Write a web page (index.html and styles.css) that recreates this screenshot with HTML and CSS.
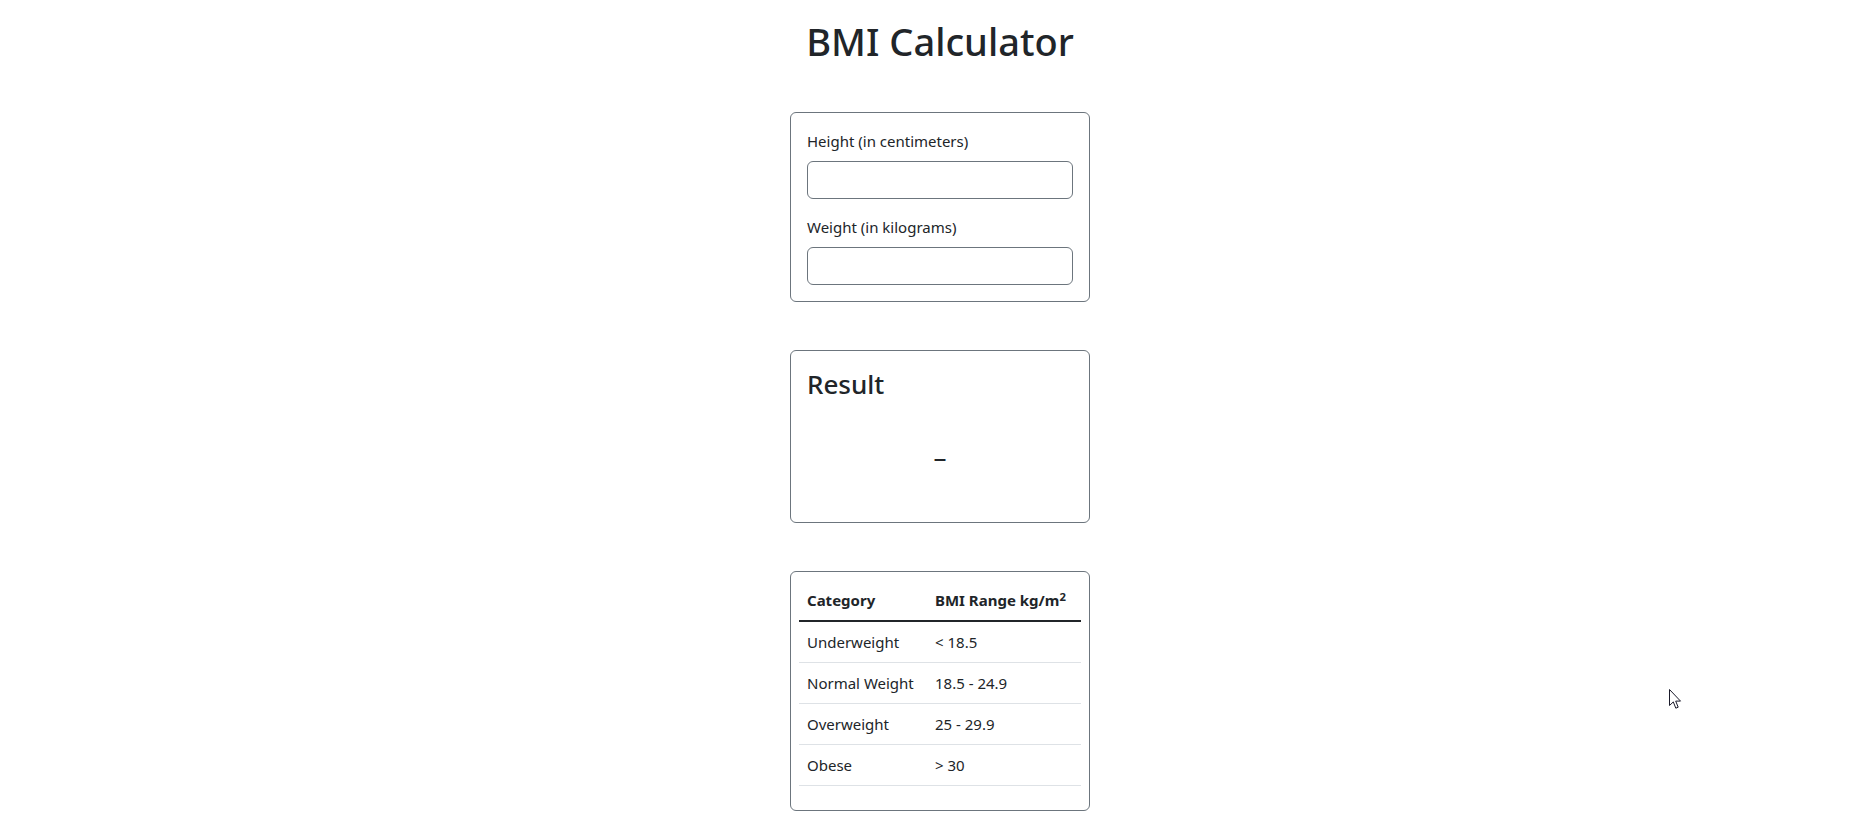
FILE: index.html
```html
<!DOCTYPE html>
<html lang="en">
<head>
<meta charset="utf-8">
<title>BMI Calculator</title>
<link rel="stylesheet" href="styles.css">
</head>
<body>
<main class="page">
  <h1 class="title">BMI Calculator</h1>

  <section class="card form-card">
    <label class="field-label" for="height">Height (in centimeters)</label>
    <input class="field-input" id="height" type="text">
    <label class="field-label second" for="weight">Weight (in kilograms)</label>
    <input class="field-input" id="weight" type="text">
  </section>

  <section class="card result-card">
    <h3 class="result-title">Result</h3>
    <div class="result-value"><span class="dash">–</span></div>
  </section>

  <section class="card table-card">
    <table class="bmi-table">
      <thead>
        <tr><th class="col-cat">Category</th><th>BMI Range kg/m<sup>2</sup></th></tr>
      </thead>
      <tbody>
        <tr><td>Underweight</td><td>&lt; 18.5</td></tr>
        <tr><td>Normal Weight</td><td>18.5 - 24.9</td></tr>
        <tr><td>Overweight</td><td>25 - 29.9</td></tr>
        <tr><td>Obese</td><td>&gt; 30</td></tr>
      </tbody>
    </table>
  </section>
</main>
<svg class="cursor" width="13" height="21" viewBox="0 0 13 21" aria-hidden="true">
  <path d="M0.5 0.5 L0.5 16.5 L4.3 12.9 L6.8 19.2 L9.2 18.2 L6.7 12.1 L11.5 12.1 Z" fill="#ffffff" stroke="#1a1a2a" stroke-width="1" stroke-linejoin="miter"/>
</svg>
</body>
</html>
```

FILE: styles.css
```css
* { box-sizing: border-box; }

html, body {
  margin: 0;
  padding: 0;
  background: #ffffff;
}

body {
  font-family: "Noto Sans", "Open Sans", sans-serif;
  font-size: 15px;
  line-height: 1.5;
  color: #212529;
}

.page {
  display: flex;
  flex-direction: column;
  align-items: center;
  padding-left: 7px;
}

.title {
  margin: 19px 0 48px;
  font-size: 38px;
  font-weight: 500;
  line-height: 45px;
}

.card {
  width: 300px;
  border: 1px solid #6c757d;
  border-radius: 6px;
  background: #fff;
}

.form-card {
  display: flex;
  flex-direction: column;
  padding: 16px;
}

.field-label {
  display: block;
  font-size: 15px;
  line-height: 24px;
  margin-bottom: 8px;
}

.field-label.second { margin-top: 16px; }

.field-input {
  display: block;
  width: 100%;
  height: 38px;
  border: 1px solid #6c757d;
  border-radius: 6px;
  padding: 6px 12px;
  font: inherit;
  background: #fff;
}

.result-card {
  margin-top: 48px;
  padding: 16px;
}

.result-title {
  margin: 2px 0 8px;
  font-size: 26px;
  font-weight: 500;
  line-height: 1.2;
}

.result-value {
  height: 98px;
  display: flex;
  align-items: center;
  justify-content: center;
}

.dash {
  font-size: 26px;
  line-height: 1;
  color: #212529;
}

.table-card {
  margin-top: 48px;
  padding: 8px;
}

.bmi-table {
  width: 100%;
  border-collapse: collapse;
  margin-bottom: 16px;
  font-size: 15px;
}

.bmi-table th,
.bmi-table td {
  padding: 8px;
  line-height: 24px;
  text-align: left;
  vertical-align: top;
}

.bmi-table th {
  font-weight: 700;
  border-bottom: 2px solid #212529;
}

.bmi-table td {
  border-bottom: 1px solid #dee2e6;
}

.col-cat { width: 128px; }

.bmi-table sup {
  font-size: 0.75em;
  line-height: 0;
  position: relative;
  top: -0.5em;
  vertical-align: baseline;
}

.cursor {
  position: absolute;
  left: 1669px;
  top: 689px;
}
```
